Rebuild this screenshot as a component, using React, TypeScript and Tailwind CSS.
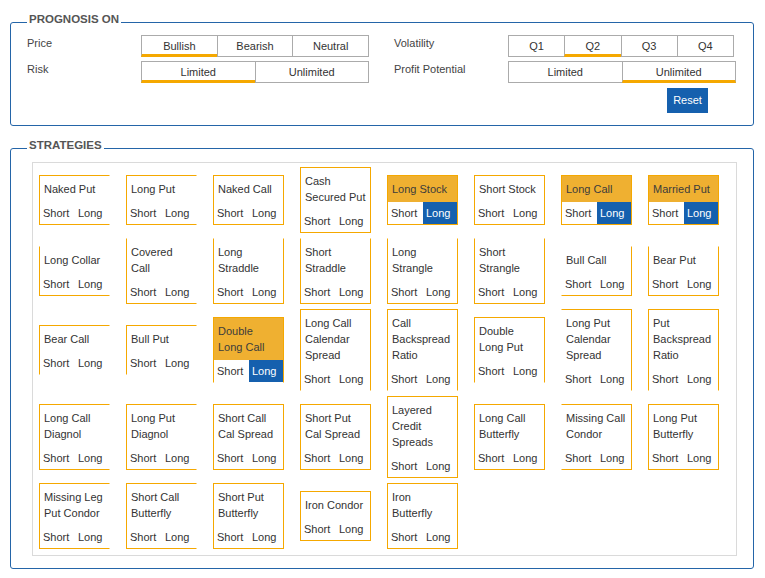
import clsx from "clsx";

type Strategy = { lines: string[]; sides: string; on?: boolean };

const STRATEGIES: Strategy[] = [
  { lines: ["Naked Put"], sides: "tlb" },
  { lines: ["Long Put"], sides: "tlb" },
  { lines: ["Naked Call"], sides: "tlbr" },
  { lines: ["Cash", "Secured Put"], sides: "tlbr" },
  { lines: ["Long Stock"], sides: "tlbr", on: true },
  { lines: ["Short Stock"], sides: "tlbr" },
  { lines: ["Long Call"], sides: "tlbr", on: true },
  { lines: ["Married Put"], sides: "tlbr", on: true },

  { lines: ["Long Collar"], sides: "lb" },
  { lines: ["Covered", "Call"], sides: "lb" },
  { lines: ["Long", "Straddle"], sides: "lrb" },
  { lines: ["Short", "Straddle"], sides: "lrb" },
  { lines: ["Long", "Strangle"], sides: "lrb" },
  { lines: ["Short", "Strangle"], sides: "lrb" },
  { lines: ["Bull Call"], sides: "rb" },
  { lines: ["Bear Put"], sides: "lrb" },

  { lines: ["Bear Call"], sides: "tl" },
  { lines: ["Bull Put"], sides: "tl" },
  { lines: ["Double", "Long Call"], sides: "tlr", on: true },
  { lines: ["Long Call", "Calendar", "Spread"], sides: "tlr" },
  { lines: ["Call", "Backspread", "Ratio"], sides: "tlr" },
  { lines: ["Double", "Long Put"], sides: "tlr" },
  { lines: ["Long Put", "Calendar", "Spread"], sides: "tr" },
  { lines: ["Put", "Backspread", "Ratio"], sides: "tlr" },

  { lines: ["Long Call", "Diagnol"], sides: "tlb" },
  { lines: ["Long Put", "Diagnol"], sides: "tlb" },
  { lines: ["Short Call", "Cal Spread"], sides: "tlbr" },
  { lines: ["Short Put", "Cal Spread"], sides: "tlbr" },
  { lines: ["Layered", "Credit", "Spreads"], sides: "tlbr" },
  { lines: ["Long Call", "Butterfly"], sides: "tlbr" },
  { lines: ["Missing Call", "Condor"], sides: "trb" },
  { lines: ["Long Put", "Butterfly"], sides: "tlbr" },

  { lines: ["Missing Leg", "Put Condor"], sides: "tlb" },
  { lines: ["Short Call", "Butterfly"], sides: "tlb" },
  { lines: ["Short Put", "Butterfly"], sides: "tlbr" },
  { lines: ["Iron Condor"], sides: "tlbr" },
  { lines: ["Iron", "Butterfly"], sides: "tlbr" },
];

function Toggle({
  options,
  active,
  width,
}: {
  options: string[];
  active: string;
  width: string;
}) {
  return (
    <div className={clsx("flex", width)}>
      {options.map((o, i) => (
        <button
          key={o}
          type="button"
          className={clsx(
            "h-[22px] flex-1 border border-[#ababab] text-center text-[11px] leading-[20px] text-[#333]",
            i > 0 && "-ml-px",
            o === active && "border-b-[3px] border-b-[#f5a800] leading-[19px]",
          )}
        >
          {o}
        </button>
      ))}
    </div>
  );
}

function Card({ s }: { s: Strategy }) {
  return (
    <div
      className={clsx(
        "w-[71px] border border-[#f5a800] bg-white text-[11px] text-[#333]",
        !s.sides.includes("t") && "border-t-transparent",
        !s.sides.includes("l") && "border-l-transparent",
        !s.sides.includes("b") && "border-b-transparent",
        !s.sides.includes("r") && "border-r-transparent",
      )}
    >
      <div
        className={clsx(
          "whitespace-nowrap pb-[5px] pl-[4px] pt-[5px] leading-4",
          s.on && "bg-[#efb031] text-[#3c3c3c]",
        )}
      >
        {s.lines.map((l) => (
          <div key={l}>{l}</div>
        ))}
      </div>
      <div className="flex h-[22px] leading-[22px]">
        <span className="w-[35px] pl-[3px]">Short</span>
        <span className={clsx("flex-1 pl-[3px]", s.on && "bg-[#1560ae] text-white")}>
          Long
        </span>
      </div>
    </div>
  );
}

export default function App() {
  return (
    <div className="h-[578px] w-[765px] bg-white pt-[12px] font-['Liberation_Sans',Arial,sans-serif] text-[11px] text-[#444]">
      <fieldset className="ml-[10px] w-[744px] rounded-[3px] border border-[#2465a8] px-[16px] pb-[12px] pt-[3px]">
        <legend className="px-[2px] pb-[6px] text-[11.5px] font-bold leading-[14px] text-[#555]">
          PROGNOSIS ON
        </legend>
        <div className="flex flex-col gap-[4px]">
          <div className="flex">
            <div className="flex w-[367px]">
              <span className="w-[114px] leading-4">Price</span>
              <Toggle options={["Bullish", "Bearish", "Neutral"]} active="Bullish" width="w-[228px]" />
            </div>
            <div className="flex">
              <span className="w-[114px] leading-4">Volatility</span>
              <Toggle options={["Q1", "Q2", "Q3", "Q4"]} active="Q2" width="w-[226px]" />
            </div>
          </div>
          <div className="flex">
            <div className="flex w-[367px]">
              <span className="w-[114px] leading-4">Risk</span>
              <Toggle options={["Limited", "Unlimited"]} active="Limited" width="w-[228px]" />
            </div>
            <div className="flex">
              <span className="w-[114px] leading-4">Profit Potential</span>
              <Toggle options={["Limited", "Unlimited"]} active="Unlimited" width="w-[228px]" />
            </div>
          </div>
        </div>
        <button
          type="button"
          className="ml-[640px] mt-[5px] h-[25px] w-[41px] bg-[#1560ae] text-[11px] text-white"
        >
          Reset
        </button>
      </fieldset>

      <fieldset className="ml-[10px] mt-[12px] w-[744px] rounded-[3px] border border-[#2465a8] px-[16px] pb-[12px] pt-[4px]">
        <legend className="px-[2px] pb-[6px] text-[11.5px] font-bold leading-[14px] text-[#555]">
          STRATEGIES
        </legend>
        <div className="ml-[5px] w-[705px] border border-[#dadada] pb-[6px] pl-[6px] pt-[4px]">
          <div className="grid grid-cols-[repeat(8,71px)] items-center gap-x-[16px] gap-y-[5px]">
            {STRATEGIES.map((s) => (
              <Card key={s.lines.join(" ")} s={s} />
            ))}
          </div>
        </div>
      </fieldset>
    </div>
  );
}
